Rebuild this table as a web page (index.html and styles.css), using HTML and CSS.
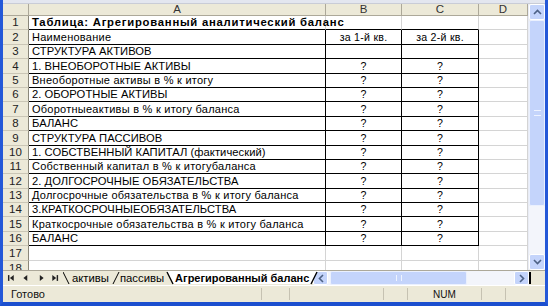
FILE: index.html
```html
<!DOCTYPE html>
<html>
<head>
<meta charset="utf-8">
<link rel="stylesheet" href="styles.css">
</head>
<body>
<div class="win">
  <div class="topstrip"></div>
  <div class="main">
    <div class="sheet">
      <div class="hd corner"></div>
      <div class="hd col">A</div>
      <div class="hd col">B</div>
      <div class="hd col">C</div>
      <div class="hd col">D</div>

      <div class="rn">1</div><div class="c a bold tb">Таблица: Агрегированный аналитический баланс</div><div class="c tb"></div><div class="c tb"></div><div class="c"></div>
      <div class="rn">2</div><div class="c a s b">Наименование</div><div class="c m s b">за 1-й кв.</div><div class="c m s b">за 2-й кв.</div><div class="c"></div>
      <div class="rn">3</div><div class="c a b">СТРУКТУРА АКТИВОВ</div><div class="c m b"></div><div class="c m b"></div><div class="c"></div>
      <div class="rn">4</div><div class="c a b">1. ВНЕОБОРОТНЫЕ АКТИВЫ</div><div class="c m b">?</div><div class="c m b">?</div><div class="c"></div>
      <div class="rn">5</div><div class="c a s b">Внеоборотные активы в % к итогу</div><div class="c m b">?</div><div class="c m b">?</div><div class="c"></div>
      <div class="rn">6</div><div class="c a b">2. ОБОРОТНЫЕ АКТИВЫ</div><div class="c m b">?</div><div class="c m b">?</div><div class="c"></div>
      <div class="rn">7</div><div class="c a s b">Оборотныеактивы в % к итогу баланса</div><div class="c m b">?</div><div class="c m b">?</div><div class="c"></div>
      <div class="rn">8</div><div class="c a b">БАЛАНС</div><div class="c m b">?</div><div class="c m b">?</div><div class="c"></div>
      <div class="rn">9</div><div class="c a b">СТРУКТУРА ПАССИВОВ</div><div class="c m b">?</div><div class="c m b">?</div><div class="c"></div>
      <div class="rn">10</div><div class="c a b">1. СОБСТВЕННЫЙ КАПИТАЛ (фактический)</div><div class="c m b">?</div><div class="c m b">?</div><div class="c"></div>
      <div class="rn">11</div><div class="c a s b">Собственный капитал в % к итогубаланса</div><div class="c m b">?</div><div class="c m b">?</div><div class="c"></div>
      <div class="rn">12</div><div class="c a b">2. ДОЛГОСРОЧНЫЕ ОБЯЗАТЕЛЬСТВА</div><div class="c m b">?</div><div class="c m b">?</div><div class="c"></div>
      <div class="rn">13</div><div class="c a s b">Долгосрочные обязательства в % к итогу баланса</div><div class="c m b">?</div><div class="c m b">?</div><div class="c"></div>
      <div class="rn">14</div><div class="c a b">3.КРАТКОСРОЧНЫЕОБЯЗАТЕЛЬСТВА</div><div class="c m b">?</div><div class="c m b">?</div><div class="c"></div>
      <div class="rn">15</div><div class="c a s b">Краткосрочные обязательства в % к итогу баланса</div><div class="c m b">?</div><div class="c m b">?</div><div class="c"></div>
      <div class="rn">16</div><div class="c a b">БАЛАНС</div><div class="c m b">?</div><div class="c m b">?</div><div class="c"></div>
      <div class="rn">17</div><div class="c"></div><div class="c"></div><div class="c"></div><div class="c"></div>
      <div class="rn rn18">18</div><div class="c"></div><div class="c"></div><div class="c"></div><div class="c"></div>
    </div>
    <div class="vscroll">
      <div class="sbtn"><svg width="9" height="6" viewBox="0 0 9 6"><path d="M1 5 L4.5 1.5 L8 5" fill="none" stroke="#4d6185" stroke-width="1.6"/></svg></div>
      <div class="vthumb"><span class="grip"></span></div>
      <div class="vtrack"></div>
      <div class="sbtn"><svg width="9" height="6" viewBox="0 0 9 6"><path d="M1 1 L4.5 4.5 L8 1" fill="none" stroke="#4d6185" stroke-width="1.6"/></svg></div>
    </div>
  </div>
  <div class="tabbar">
    <div class="nav">
      <svg width="56" height="10" viewBox="0 0 56 10">
        <rect x="1" y="2" width="1.5" height="6" fill="#222"/>
        <path d="M3 5 L7 2 L7 8 Z" fill="#222"/>
        <path d="M17 5 L21 2 L21 8 Z" fill="#222"/>
        <path d="M34 2 L38 5 L34 8 Z" fill="#222"/>
        <path d="M47 2 L51 5 L47 8 Z" fill="#222"/>
        <rect x="51.5" y="2" width="1.5" height="6" fill="#222"/>
      </svg>
    </div>
    <div class="tabs">
      <svg class="tabsvg" width="260" height="15" viewBox="0 0 260 15">
        <path d="M104 0 L110 13 L248 13 L254 0 Z" fill="#fff"/>
        <path d="M0 1 L6 13" stroke="#000" stroke-width="1" fill="none"/>
        <path d="M50 13 L56 1" stroke="#000" stroke-width="1" fill="none"/>
        <path d="M104 1 L110 13" stroke="#000" stroke-width="1.4" fill="none"/>
        <path d="M248 13 L254 1" stroke="#000" stroke-width="1.4" fill="none"/>
      </svg>
      <span class="tab t1">активы</span>
      <span class="tab t2">пассивы</span>
      <span class="tab t3">Агрегированный баланс</span>
    </div>
    <div class="hscroll">
      <div class="sbtn h"><svg width="6" height="9" viewBox="0 0 6 9"><path d="M5 1 L1.5 4.5 L5 8" fill="none" stroke="#4d6185" stroke-width="1.6"/></svg></div>
      <div class="hthumb"><span class="hgrip"></span></div>
      <div class="htrack"></div>
      <div class="sbtn h"><svg width="6" height="9" viewBox="0 0 6 9"><path d="M1 1 L4.5 4.5 L1 8" fill="none" stroke="#4d6185" stroke-width="1.6"/></svg></div>
    </div>
    <div class="split"></div>
    <div class="corner2"></div>
  </div>
  <div class="status">
    <span class="ready">Готово</span>
    <div class="panels">
      <span class="p w28"></span>
      <span class="p w94"></span>
      <span class="p w24"></span>
      <span class="p num">NUM</span>
      <span class="p w24"></span>
      <span class="p w26"></span>
      <span class="p last"></span>
    </div>
  </div>
</div>
</body>
</html>
```

FILE: styles.css
```css
* { box-sizing: border-box; }
html, body { margin: 0; padding: 0; }
body {
  width: 548px;
  height: 306px;
  overflow: hidden;
  font-family: "Liberation Sans", Arial, sans-serif;
  background: #2a5bd7;
}
.win {
  width: 548px;
  height: 306px;
  display: flex;
  flex-direction: column;
  border-left: 3px solid #2458d8;
  border-right: 3px solid #2458d8;
  border-bottom: 4px solid #1b4fcf;
  background: #ece9d8;
}
.topstrip {
  height: 4px;
  background: #e3e6ef;
  border-bottom: 1px solid #c9ccd6;
}
.main {
  display: flex;
  height: 266px;
  overflow: hidden;
}
.sheet {
  width: 525px;
  display: grid;
  grid-template-columns: 26px 297px 76px 77px 49px;
  grid-template-rows: 12px repeat(17, 14.4px) 14px;
  background: #fff;
  overflow: hidden;
}
.hd {
  background: #ece9d8;
  border-right: 1px solid #aca899;
  border-bottom: 1px solid #aca899;
  font-size: 11.5px;
  color: #333;
  display: flex;
  align-items: center;
  justify-content: center;
  line-height: 11px;
}
.rn {
  background: #ece9d8;
  border-right: 1px solid #8a877a;
  border-bottom: 1px solid #cac6b6;
  font-size: 11.5px;
  color: #222;
  display: flex;
  align-items: flex-end;
  justify-content: center;
  line-height: 13px;
}
.rn18 { align-items: flex-start; padding-top: 1px; }
.c {
  border-right: 1px solid #d4d4d4;
  border-bottom: 1px solid #d4d4d4;
  font-size: 11px;
  color: #000;
  white-space: nowrap;
  overflow: visible;
  display: flex;
  align-items: flex-end;
  line-height: 13px;
  min-width: 0;
}
.c.a { padding-left: 3px; font-size: 11.2px; letter-spacing: 0.05px; }
.c.s { font-size: 11px; letter-spacing: 0.25px; }
.c.bold { font-weight: bold; font-size: 11.3px; letter-spacing: 0.75px; }
.c.m { justify-content: center; font-size: 10.6px; }
.c.b { border-right-color: #000; border-bottom-color: #000; }
.c.tb { border-bottom-color: #000; }

.vscroll {
  width: 17px;
  display: flex;
  flex-direction: column;
  background: #f2f2ee;
  border-left: 1px solid #e9ecf5;
}
.sbtn {
  height: 16px;
  background: #c4d4fb;
  border: 1px solid #fff;
  border-radius: 2px;
  display: flex;
  align-items: center;
  justify-content: center;
}
.vthumb {
  height: 186px;
  background: #c4d4fb;
  border: 1px solid #eaf0fe;
  border-radius: 2px;
  display: flex;
  align-items: center;
  justify-content: center;
}
.grip {
  width: 7px;
  height: 6px;
  border-top: 1px solid #eef3ff;
  border-bottom: 1px solid #eef3ff;
}
.vtrack { flex: 1; background: #f3f5fb; }

.tabbar {
  height: 15px;
  display: flex;
  background: #ece9d8;
  border-top: 1px solid #aca899;
}
.nav {
  width: 58px;
  display: flex;
  align-items: center;
  padding-left: 4px;
}
.tabs {
  position: relative;
  width: 252px;
  display: flex;
  align-items: center;
  font-size: 11.3px;
  height: 14px;
}
.tabsvg { position: absolute; left: 2px; top: 0; }
.tab { position: relative; white-space: nowrap; line-height: 13px; }
.t1 { margin-left: 11px; }
.t2 { margin-left: 11px; }
.t3 { margin-left: 11px; font-weight: bold; font-size: 11px; }
.hscroll {
  width: 216px;
  display: flex;
  height: 14px;
  background: #f3f5fb;
}
.sbtn.h { width: 15px; height: 14px; }
.hthumb {
  width: 137px;
  margin-left: 2px;
  background: #c4d4fb;
  border: 1px solid #eaf0fe;
  border-radius: 2px;
  display: flex;
  align-items: center;
  justify-content: center;
}
.hgrip {
  width: 6px;
  height: 6px;
  border-left: 1px solid #eef3ff;
  border-right: 1px solid #eef3ff;
}
.htrack { flex: 1; }
.split { width: 2px; background: #000; margin: 1px 0; }
.corner2 { flex: 1; background: #ece9d8; }

.status {
  flex: 1;
  display: flex;
  align-items: center;
  justify-content: space-between;
  border-top: 1px solid #fff;
  font-size: 11px;
  color: #111;
}
.ready { padding-left: 8px; }
.panels { display: flex; height: 100%; padding: 2px 0; }
.p {
  border-left: 1px solid #c6c2b2;
  display: flex;
  align-items: center;
  justify-content: center;
  font-size: 10px;
}
.w28 { width: 28px; }
.w94 { width: 94px; }
.w24 { width: 24px; }
.w26 { width: 26px; }
.num { width: 74px; }
.last { width: 14px; border-left: none; }
```
